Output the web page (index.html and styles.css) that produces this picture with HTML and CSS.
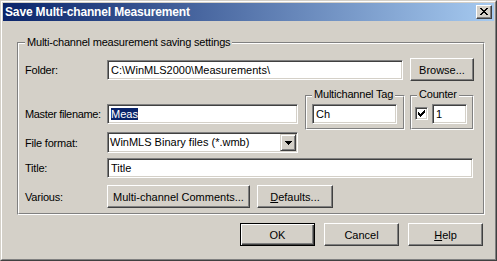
FILE: index.html
```html
<!DOCTYPE html>
<html>
<head>
<meta charset="utf-8">
<title>Save Multi-channel Measurement</title>
<link rel="stylesheet" href="styles.css">
</head>
<body>
<div class="window">
  <div class="frame">
    <div class="titlebar">
      <span class="title">Save Multi-channel Measurement</span>
      <div class="close">
        <svg width="14" height="12" viewBox="0 0 14 12" shape-rendering="crispEdges">
          <g fill="#000">
            <rect x="3" y="2" width="2" height="1"/><rect x="9" y="2" width="2" height="1"/>
            <rect x="4" y="3" width="2" height="1"/><rect x="8" y="3" width="2" height="1"/>
            <rect x="5" y="4" width="4" height="1"/>
            <rect x="6" y="5" width="2" height="1"/>
            <rect x="5" y="6" width="4" height="1"/>
            <rect x="4" y="7" width="2" height="1"/><rect x="8" y="7" width="2" height="1"/>
            <rect x="3" y="8" width="2" height="1"/><rect x="9" y="8" width="2" height="1"/>
          </g>
        </svg>
      </div>
    </div>
    <div class="content">
      <div class="group">
        <span class="glabel">Multi-channel measurement saving settings</span>
        <div class="ginner main">
          <div class="row r1">
            <span class="lbl">Folder:</span>
            <div class="edit folder">C:\WinMLS2000\Measurements\</div>
            <div class="btn browse">Browse...</div>
          </div>
          <div class="row r2">
            <span class="lbl lbl2">Master filename:</span>
            <div class="edit master"><span class="sel">Meas</span></div>
            <div class="group small tag">
              <span class="glabel sm">Multichannel Tag</span>
              <div class="ginner sinner">
                <div class="edit tagedit">Ch</div>
              </div>
            </div>
            <div class="group small counter">
              <span class="glabel sm">Counter</span>
              <div class="ginner sinner">
                <div class="check">
                  <svg width="11" height="11" viewBox="0 0 11 11" shape-rendering="crispEdges">
                    <g fill="#000">
                      <rect x="2" y="4" width="1" height="3"/>
                      <rect x="3" y="5" width="1" height="3"/>
                      <rect x="4" y="6" width="1" height="3"/>
                      <rect x="5" y="5" width="1" height="3"/>
                      <rect x="6" y="4" width="1" height="3"/>
                      <rect x="7" y="3" width="1" height="3"/>
                      <rect x="8" y="2" width="1" height="3"/>
                    </g>
                  </svg>
                </div>
                <div class="edit countedit">1</div>
              </div>
            </div>
          </div>
          <div class="row r3">
            <span class="lbl">File format:</span>
            <div class="combo">
              <span class="combotext">WinMLS Binary files (*.wmb)</span>
              <div class="dropbtn">
                <svg width="7" height="4" viewBox="0 0 7 4" shape-rendering="crispEdges">
                  <g fill="#000">
                    <rect x="0" y="0" width="7" height="1"/>
                    <rect x="1" y="1" width="5" height="1"/>
                    <rect x="2" y="2" width="3" height="1"/>
                    <rect x="3" y="3" width="1" height="1"/>
                  </g>
                </svg>
              </div>
            </div>
          </div>
          <div class="row r4">
            <span class="lbl">Title:</span>
            <div class="edit titleedit">Title</div>
          </div>
          <div class="row r5">
            <span class="lbl">Various:</span>
            <div class="btn comments">Multi-channel Comments...</div>
            <div class="btn defaults"><span><u>D</u>efaults...</span></div>
          </div>
        </div>
      </div>
      <div class="actions">
        <div class="btn action default">OK</div>
        <div class="btn action">Cancel</div>
        <div class="btn action"><span><u>H</u>elp</span></div>
      </div>
    </div>
  </div>
</div>
</body>
</html>
```
FILE: styles.css
```css
* { box-sizing: border-box; }
html, body { margin: 0; padding: 0; }
body {
  width: 497px;
  height: 261px;
  overflow: hidden;
  background: #D4D0C8;
  font-family: "Liberation Sans", Arial, sans-serif;
  font-size: 11px;
  color: #000;
}
.window {
  width: 497px;
  height: 261px;
  background: #D4D0C8;
  border: 1px solid;
  border-color: #D4D0C8 #404040 #404040 #D4D0C8;
}
.frame {
  height: 100%;
  border: 1px solid;
  border-color: #fff #808080 #808080 #fff;
  padding: 1px;
  display: flex;
  flex-direction: column;
}
.titlebar {
  height: 18px;
  flex: none;
  background: linear-gradient(to right, #0A246A, #A6CAF0);
  display: flex;
  align-items: center;
  justify-content: space-between;
  padding: 0 2px 0 2px;
}
.title {
  color: #fff;
  font-weight: bold;
  font-size: 12px;
  letter-spacing: -0.15px;
  line-height: 18px;
  white-space: nowrap;
}
.close {
  width: 16px;
  height: 14px;
  background: #D4D0C8;
  border: 1px solid;
  border-color: #fff #404040 #404040 #fff;
  box-shadow: inset -1px -1px #808080;
  display: flex;
}
.close svg { display: block; }
.content {
  flex: 1;
  padding: 21px 9px 0 14px;
  display: flex;
  flex-direction: column;
}
.group {
  position: relative;
  border: 1px solid;
  border-color: #808080 #fff #fff #808080;
}
.ginner {
  border: 1px solid;
  border-color: #fff #808080 #808080 #fff;
}
.glabel {
  position: absolute;
  top: -7px;
  left: 7px;
  padding: 0 2px;
  background: #D4D0C8;
  line-height: 13px;
  white-space: nowrap;
  letter-spacing: -0.2px;
}
.glabel.sm { left: 6px; top: -8px; }
.ginner.main { padding: 14px 0 5px 6px; }
.row { display: flex; align-items: center; }
.lbl { width: 82px; flex: none; white-space: nowrap; letter-spacing: -0.2px; }
.r1 { height: 23px; }
.r2 { height: 35px; margin-top: 14px; align-items: flex-start; }
.r3 { height: 21px; margin-top: 2px; }
.r4 { height: 20px; margin-top: 5px; }
.r5 { height: 23px; margin-top: 7px; }
.lbl2 { margin-top: 9px; line-height: 20px; letter-spacing: -0.35px; }

.edit {
  height: 20px;
  flex: none;
  background: #fff;
  border: 1px solid;
  border-color: #808080 #fff #fff #808080;
  box-shadow: inset 1px 1px #404040, inset -1px -1px #D4D0C8;
  padding: 0 3px;
  line-height: 18px;
  white-space: nowrap;
  overflow: hidden;
}
.folder { width: 296px; align-self: flex-start; margin-top: 2px; }
.master { width: 191px; margin-top: 9px; }
.titleedit { width: 366px; }
.sel { background: #0A246A; color: #fff; }

.small { flex: none; height: 35px; }
.tag { width: 100px; margin-left: 7px; }
.counter { width: 64px; margin-left: 5px; }
.sinner {
  height: 100%;
  display: flex;
  align-items: flex-start;
  padding: 7px 0 0 0;
}
.tag .sinner { padding-left: 5px; }
.counter .sinner { padding-left: 3px; }
.tagedit { width: 85px; }
.countedit { width: 35px; }
.check {
  width: 13px;
  height: 13px;
  flex: none;
  margin-top: 3px;
  margin-right: 4px;
  background: #fff;
  border: 1px solid;
  border-color: #808080 #fff #fff #808080;
  box-shadow: inset 1px 1px #404040, inset -1px -1px #D4D0C8;
}
.check svg { display: block; }

.combo {
  width: 191px;
  height: 21px;
  flex: none;
  display: flex;
  background: #fff;
  border: 1px solid;
  border-color: #808080 #fff #fff #808080;
  box-shadow: inset 1px 1px #404040, inset -1px -1px #D4D0C8;
  padding: 1px;
}
.combotext {
  flex: 1;
  padding-left: 1px;
  line-height: 17px;
  white-space: nowrap;
  overflow: hidden;
}
.dropbtn {
  width: 16px;
  height: 17px;
  flex: none;
  background: #D4D0C8;
  border: 1px solid;
  border-color: #D4D0C8 #404040 #404040 #D4D0C8;
  box-shadow: inset 1px 1px #fff, inset -1px -1px #808080;
  display: flex;
  align-items: center;
  justify-content: center;
}
.dropbtn svg { display: block; }

.btn {
  height: 23px;
  flex: none;
  background: #D4D0C8;
  border: 1px solid;
  border-color: #fff #404040 #404040 #fff;
  box-shadow: inset -1px -1px #808080;
  display: flex;
  align-items: center;
  justify-content: center;
  white-space: nowrap;
}
.browse { width: 64px; margin-left: 7px; }
.comments { width: 143px; }
.defaults { width: 76px; margin-left: 7px; }
.actions {
  display: flex;
  justify-content: flex-end;
  gap: 9px;
  margin-top: 8px;
  padding-right: 2px;
}
.action { width: 75px; }
.btn.default {
  border-color: #000;
  box-shadow: inset 1px 1px #fff, inset -1px -1px #404040, inset -2px -2px #808080;
}
u { text-decoration: underline; text-underline-offset: 1px; }
```
